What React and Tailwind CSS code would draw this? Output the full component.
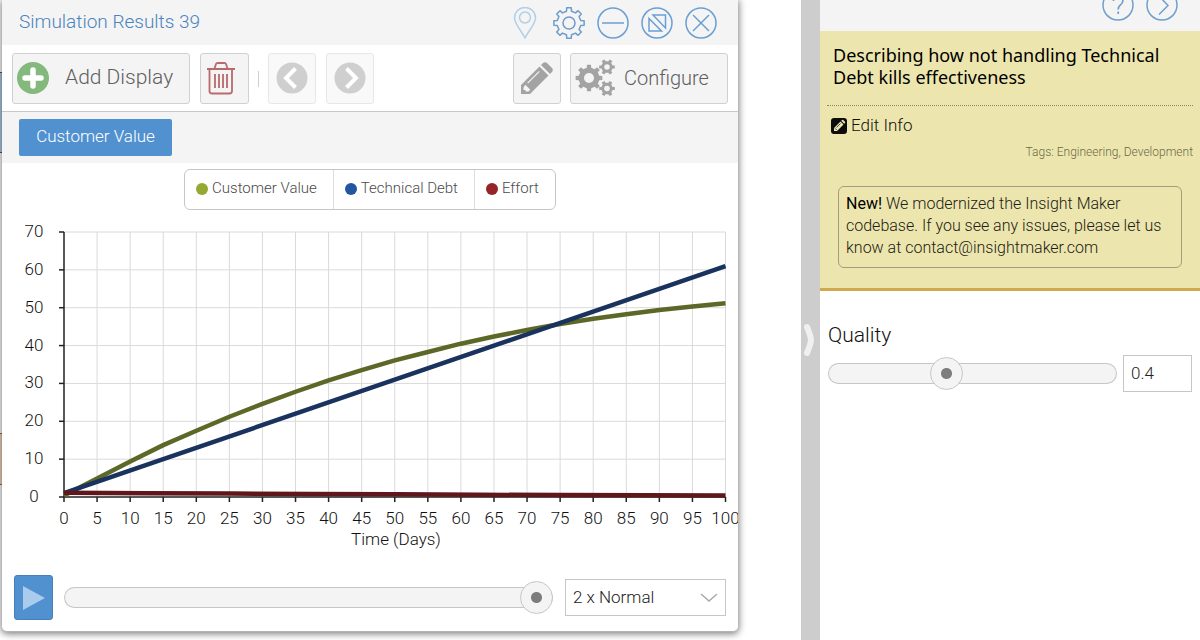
import React from 'react';

// Outline of a cog: `teeth` teeth between the radii r1 and r2
function cogPath(cx, cy, r1, r2, teeth, turn = 0) {
  const step = (Math.PI * 2) / teeth;
  const pts = [];
  for (let i = 0; i < teeth; i++) {
    const a = i * step + turn;
    [[r1, -0.27], [r2, -0.19], [r2, 0.19], [r1, 0.27]].forEach(([r, k]) => {
      pts.push((cx + r * Math.cos(a + k * step)).toFixed(2) + ' ' + (cy + r * Math.sin(a + k * step)).toFixed(2));
    });
  }
  return 'M' + pts.join('L') + 'Z';
}

function holePath(cx, cy, r) {
  return `M${cx - r} ${cy}a${r} ${r} 0 1 0 ${2 * r} 0a${r} ${r} 0 1 0 ${-2 * r} 0Z`;
}

function OutlineIcon({ children, className }) {
  return (
    <svg viewBox="0 0 32 32" fill="none" stroke="currentColor" strokeWidth="1.5" className={'h-8 w-8 ' + (className || '')}>
      {children}
    </svg>
  );
}

const headerIcons = [
  { label: 'Pin', className: 'text-[#b3cfe6]', icon: <><path d="M16 31C12 23 5.500 17 5.500 11a10.500 10.500 0 0 1 21 0C26.500 17 20 23 16 31Z" /><circle cx="16" cy="10.500" r="5.500" /></> },
  { label: 'Settings', className: 'text-[#6f9cc9]', icon: <><path d={cogPath(16, 16, 12, 15.3, 8)} strokeLinejoin="round" /><circle cx="16" cy="16" r="6" /></> },
  { label: 'Minimize', className: 'text-[#6a9fd4]', icon: <><circle cx="16" cy="16" r="15" /><path d="M5 16h22" /></> },
  { label: 'Maximize', className: 'text-[#6a9fd4]', icon: <><circle cx="16" cy="16" r="15" /><path d="M8 11.500V24h12.500ZM12 8h12.500v13Z" /></> },
  { label: 'Close', className: 'text-[#6a9fd4]', icon: <><circle cx="16" cy="16" r="15" /><path d="M8 8l16 16M24 8L8 24" /></> },
];

const toolButton = 'flex h-[51px] items-center rounded-[3px] border border-[#d0d0d0] bg-[#f4f4f4] pb-[2px] text-[#5f5f5f]';

const rangeStyle = [
  'h-8 min-w-0 flex-1 appearance-none bg-transparent',
  '[&::-webkit-slider-runnable-track]:h-[21px] [&::-webkit-slider-runnable-track]:rounded-full',
  '[&::-webkit-slider-runnable-track]:bg-[#f4f4f4] [&::-webkit-slider-runnable-track]:shadow-[inset_0_0_0_1px_#c6c6c6]',
  '[&::-webkit-slider-thumb]:mt-[-6px] [&::-webkit-slider-thumb]:box-border [&::-webkit-slider-thumb]:h-[33px] [&::-webkit-slider-thumb]:w-[33px]',
  '[&::-webkit-slider-thumb]:appearance-none [&::-webkit-slider-thumb]:rounded-full [&::-webkit-slider-thumb]:border [&::-webkit-slider-thumb]:border-[#c6c6c6]',
  '[&::-webkit-slider-thumb]:bg-[radial-gradient(circle,#7d7d7d_5px,#f4f4f4_6px)]',
].join(' ');

const series = [
  { name: 'Customer Value', dot: 'bg-[#94a832]', stroke: '#5c6827', values: [0.4, 4.9, 9.4, 13.7, 17.5, 21.2, 24.6, 27.8, 30.8, 33.5, 36.1, 38.3, 40.5, 42.4, 44.1, 45.7, 47.1, 48.3, 49.4, 50.3, 51.2] },
  { name: 'Technical Debt', dot: 'bg-[#2456a0]', stroke: '#1a335e', values: [1, 61] },
  { name: 'Effort', dot: 'bg-[#942428]', stroke: '#5f171b', values: [1.1, 1, 0.9, 0.8, 0.7, 0.6, 0.5, 0.45, 0.4] },
];

function Chart() {
  const left = 62, right = 723.5, top = 16, bottom = 281;
  const px = (t) => left + ((right - left) * t) / 100;
  const py = (v) => bottom - ((bottom - top) * v) / 70;
  const times = Array.from({ length: 21 }, (_, i) => i * 5);
  const levels = [0, 10, 20, 30, 40, 50, 60, 70];

  return (
    <svg viewBox="0 0 736 346" className="block w-full" role="img" aria-label="Simulation results over time">
      <g stroke="#dadada" strokeWidth="1">
        {times.slice(1).map((t) => <line key={t} x1={px(t)} x2={px(t)} y1={top} y2={bottom} />)}
        {levels.slice(1).map((v) => <line key={v} x1={left} x2={right} y1={py(v)} y2={py(v)} />)}
      </g>
      <g stroke="#222" strokeWidth="1.500">
        <path d={`M${left} ${top}V${bottom}H${right}`} fill="none" />
        {times.map((t) => <line key={t} x1={px(t)} x2={px(t)} y1={bottom} y2={bottom + 5} />)}
        {levels.map((v) => <line key={v} x1={left - 5} x2={left} y1={py(v)} y2={py(v)} />)}
      </g>
      {series.map((s) => (
        <polyline
          key={s.name}
          fill="none"
          stroke={s.stroke}
          strokeWidth="4.500"
          strokeLinejoin="round"
          points={s.values.map((v, i) => px((100 * i) / (s.values.length - 1)) + ',' + py(v)).join(' ')}
        />
      ))}
      <g fill="#111" fontSize="17" textAnchor="middle">
        {levels.map((v) => <text key={v} x="32" y={py(v) + 5}>{v}</text>)}
        {times.map((t) => <text key={t} x={px(t)} y="308">{t}</text>)}
        <text x="394" y="329">Time (Days)</text>
      </g>
    </svg>
  );
}

function Toolbar() {
  return (
    <div className="flex items-center border-b border-[#c8c8c8] px-[10px] pt-2 pb-[7px]">
      <button className={toolButton + ' w-[178px] pl-1 text-[21px]'}>
        <svg viewBox="0 0 32 32" className="h-8 w-8">
          <circle cx="16" cy="16" r="16" fill="#84b97e" />
          <path d="M16 8v16M8 16h16" stroke="#fff" strokeWidth="5.500" strokeLinecap="round" />
        </svg>
        <span className="ml-4">Add Display</span>
      </button>
      <button className={toolButton + ' ml-[10px] w-[49px] pl-1'} aria-label="Delete display">
        <svg viewBox="0 0 32 34" fill="none" stroke="#b96a6c" strokeWidth="1.800" className="h-[34px] w-8 shrink-0">
          <path d="M2 8h28M4.500 8.500V30q0 2.500 2.500 2.500h17.500q2.500 0 2.500-2.500V8.500M9.500 7.500l1.500-4.500q.4-1 1.500-1h7q1.100 0 1.500 1L22.500 7.500" />
          <path d="M10 13v14M14 13v14M18 13v14M22 13v14" />
        </svg>
      </button>
      <span className="mx-[9px] h-4 w-px bg-[#cfcfcf]" />
      <button className={toolButton + ' w-[48px] justify-center opacity-50'} aria-label="Previous display">
        <svg viewBox="0 0 32 32" className="h-8 w-8">
          <circle cx="16" cy="16" r="15.500" fill="#a0a0a0" />
          <path d="M19.500 6.500L10 16l9.500 9.500" fill="none" stroke="#fff" strokeWidth="4" />
        </svg>
      </button>
      <button className={toolButton + ' ml-[10px] w-[48px] justify-center opacity-50'} aria-label="Next display">
        <svg viewBox="0 0 32 32" className="h-8 w-8">
          <circle cx="16" cy="16" r="15.500" fill="#a0a0a0" />
          <path d="M12.500 6.500L22 16l-9.500 9.500" fill="none" stroke="#fff" strokeWidth="4" />
        </svg>
      </button>
      <button className={toolButton + ' ml-auto w-[48px] justify-center'} aria-label="Edit">
        <svg viewBox="0 0 32 32" fill="#a3a3a3" className="h-8 w-8">
          <path fillRule="evenodd" d="M0 23L18.500 4.500L27.500 13.500L9 32H0ZM2.500 25.500V28H4.500V29.500H7.500L9.300 27.700L4.300 22.700ZM7 21.500L18.800 9.700L18 8.900L6.200 20.700Z" />
          <path d="M20 3L22 1q2-1.600 4 0l5 5q1.600 2 0 4l-2 2Z" />
        </svg>
      </button>
      <button className={toolButton + ' ml-[9px] w-[158px] pl-1 text-xl'}>
        <svg viewBox="0 0 41 38" fill="#a3a3a3" fillRule="evenodd" className="h-[38px] w-[41px]">
          <path d={cogPath(14, 19, 10.5, 13.5, 8) + holePath(14, 19, 5)} />
          <path d={cogPath(32, 8, 5.8, 8, 6) + holePath(32, 8, 2.8)} />
          <path d={cogPath(32, 29.5, 5.8, 8, 6) + holePath(32, 29.5, 2.8)} />
        </svg>
        <span className="ml-2">Configure</span>
      </button>
    </div>
  );
}

function ResultsWindow() {
  return (
    <section className="relative mr-[63px] ml-[2px] overflow-hidden rounded-b-[5px] border-b border-[#b4b4b4] bg-white shadow-[0_1px_7px_1px_rgba(0,0,0,0.5)]">
      <header className="flex h-[45px] items-center bg-[#f4f4f4] pr-[21px] pl-[17px]">
        <h1 className="text-[19px] text-[#4a83bd]">Simulation Results 39</h1>
        <div className="ml-auto flex gap-3">
          {headerIcons.map((item) => (
            <button key={item.label} aria-label={item.label}>
              <OutlineIcon className={item.className}>{item.icon}</OutlineIcon>
            </button>
          ))}
        </div>
      </header>
      <Toolbar />
      <div className="flex bg-[#f4f4f4] px-[17px] py-[7px]">
        <button className="h-[37px] w-[153px] rounded-[2px] bg-[#5191d0] pb-[2px] text-[17px] text-white">Customer Value</button>
      </div>
      <div className="mt-[6px] flex justify-center">
        <ul className="flex h-[41px] divide-x divide-[#ddd] rounded-md border border-[#c6c6c6] text-[15px] text-[#4a4a4a]">
          {series.map((s) => (
            <li key={s.name} className="flex items-center gap-1 pr-4 pb-[2px] pl-[11px]">
              <span className={'h-3 w-3 rounded-full ' + s.dot} />
              {s.name}
            </li>
          ))}
        </ul>
      </div>
      <div className="mt-[6px]">
        <Chart />
      </div>
      <div className="flex items-center px-3 pt-[13px] pb-[11px]">
        <button className="flex h-[45px] w-[39px] items-center justify-center rounded-[3px] border border-[#467fba] bg-[#5191d0]" aria-label="Play">
          <svg viewBox="0 0 22 24" className="h-6 w-[22px]"><path d="M0 0L22 12L0 24Z" fill="#a9ccec" /></svg>
        </button>
        <input type="range" min="0" max="100" defaultValue="100" aria-label="Time" className={rangeStyle + ' ml-[11px]'} />
        <label className="relative ml-3 block">
          <select className="h-[37px] w-[161px] appearance-none border border-[#c6c6c6] bg-white px-[7px] text-[17px] text-[#222]" aria-label="Speed">
            <option>2 x Normal</option>
          </select>
          <svg viewBox="0 0 18 9" fill="none" stroke="#aaa" strokeWidth="1.500" className="pointer-events-none absolute top-[14px] right-2 h-[9px] w-[18px]">
            <path d="M1 1l8 7l8-7" />
          </svg>
        </label>
      </div>
    </section>
  );
}

function Sidebar() {
  return (
    <aside className="w-[380px] shrink-0 bg-white">
      <div className="flex h-[31px] items-end justify-end gap-3 bg-[#f4f4f4] pr-[22px] pb-[10px] text-[#6f9fce]">
        <button aria-label="Help">
          <OutlineIcon>
            <circle cx="16" cy="16" r="15" />
            <path d="M11.500 12q0-5 4.700-5t4.700 4.500q0 2.500-2.700 4.700-2 1.700-2 4.300M16.200 22.500v2.500" strokeWidth="1.700" />
          </OutlineIcon>
        </button>
        <button aria-label="Collapse">
          <OutlineIcon>
            <circle cx="16" cy="16" r="15" />
            <path d="M13 7l9 9.500l-9 9" />
          </OutlineIcon>
        </button>
      </div>
      <div className="border-b-[3px] border-[#cfa94c] bg-[#ece6ae] px-[7px] pb-5">
        <h2 className="border-b border-dotted border-[#8a865f] pt-[13px] pr-4 pb-[17px] pl-[6px] font-['Noto_Sans',sans-serif] text-lg leading-[22px] font-normal text-black">
          Describing how not handling Technical Debt kills effectiveness
        </h2>
        <a href="#edit" className="mt-[7px] flex items-center gap-1 pl-1 text-[17px] text-[#111]">
          <svg viewBox="0 0 16 16" className="h-4 w-4">
            <rect width="16" height="16" rx="3" fill="#0c0c0c" />
            <path d="M3 10L9.500 3.500L12.500 6.500L6 13H3ZM10.200 2.800L11 2q.6-.5 1.200 0L14 3.800q.5.600 0 1.200l-.8.800Z" fill="#ece6ae" />
            <path d="M4 10.300L5.700 12M5.500 9.500L9.500 5.500" stroke="#0c0c0c" strokeWidth="0.700" />
          </svg>
          Edit Info
        </a>
        <p className="mt-[3px] text-right text-xs leading-5 text-[#6c694a]">Tags: Engineering, Development</p>
        <p className="mx-[11px] mt-6 rounded-md border border-[#a19e80] px-[7px] pt-[6px] pb-2 text-base leading-[22px] text-[#222014]">
          <b className="font-normal text-black">New!</b> We modernized the Insight Maker codebase. If you see any issues, please let us know at contact@insightmaker.com
        </p>
      </div>
      <div className="px-2 pt-[30px]">
        <label htmlFor="quality" className="block text-[21px] leading-7 text-[#111]">Quality</label>
        <div className="mt-[6px] flex items-center gap-[6px]">
          <input id="quality" type="range" min="0" max="1" step="0.1" defaultValue="0.4" className={rangeStyle} />
          <input type="text" defaultValue="0.4" aria-label="Quality value" className="h-[37px] w-[69px] border border-[#c6c6c6] px-[7px] text-[17px] text-[#222]" />
        </div>
      </div>
    </aside>
  );
}

function App() {
  return (
    <div className="flex min-h-screen overflow-hidden bg-white font-[Roboto,'Liberation_Sans',sans-serif] font-light">
      <main className="relative min-w-0 flex-1">
        {/* Diagram nodes under the window */}
        <div className="absolute top-[72px] left-0 h-[81px] w-10 border-y border-[#555] bg-[#b4cbe6]" />
        <div className="absolute top-[433px] left-0 h-[52px] w-10 border-y border-[#777] bg-[#f3d6c0]" />
        <ResultsWindow />
      </main>
      <div className="w-[19px] shrink-0 bg-[#cdcdcd] pt-[323px]">
        <button aria-label="Toggle sidebar" className="block pl-[2px]">
          <svg viewBox="0 0 12 34" fill="none" stroke="#f0f0f0" strokeWidth="6" strokeLinecap="round" strokeLinejoin="round" className="h-[34px] w-3">
            <path d="M4 4q3.500 8 4 13q-.5 5-4 13" />
          </svg>
        </button>
      </div>
      <Sidebar />
    </div>
  );
}

export default App;
